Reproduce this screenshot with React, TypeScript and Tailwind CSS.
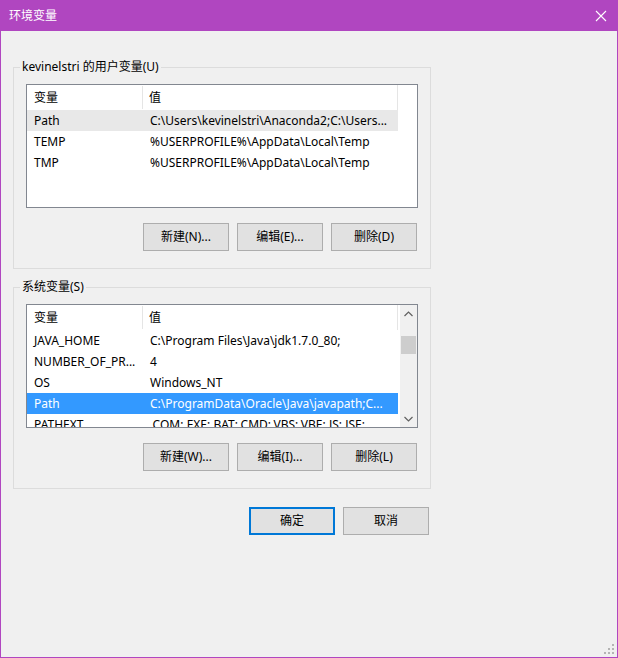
type Row = { name: string; value: string; state?: 'selected' | 'inactive' };

const userRows: Row[] = [
  { name: 'Path', value: 'C:\\Users\\kevinelstri\\Anaconda2;C:\\Users...', state: 'inactive' },
  { name: 'TEMP', value: '%USERPROFILE%\\AppData\\Local\\Temp' },
  { name: 'TMP', value: '%USERPROFILE%\\AppData\\Local\\Temp' },
];

const systemRows: Row[] = [
  { name: 'JAVA_HOME', value: 'C:\\Program Files\\Java\\jdk1.7.0_80;' },
  { name: 'NUMBER_OF_PR...', value: '4' },
  { name: 'OS', value: 'Windows_NT' },
  { name: 'Path', value: 'C:\\ProgramData\\Oracle\\Java\\javapath;C...', state: 'selected' },
  { name: 'PATHEXT', value: '.COM;.EXE;.BAT;.CMD;.VBS;.VBE;.JS;.JSE;...' },
];

function Button({ label, primary }: { label: string; primary?: boolean }) {
  return (
    <button
      className={
        'flex h-[28px] w-[86px] items-center justify-center bg-[#e1e1e1] text-[12px] text-black ' +
        (primary ? 'border-2 border-[#0078d7]' : 'border border-[#adadad]')
      }
    >
      {label}
    </button>
  );
}

function ScrollBar() {
  return (
    <div className="flex w-[17px] shrink-0 flex-col bg-[#f0f0f0]">
      <div className="flex h-[17px] items-center justify-center">
        <svg width="9" height="6" viewBox="0 0 9 6">
          <path d="M0.5 5 L4.5 1 L8.5 5" fill="none" stroke="#606060" strokeWidth="1.2" />
        </svg>
      </div>
      <div className="mx-[1px] mt-[14px] h-[18px] bg-[#cdcdcd]" />
      <div className="flex-1" />
      <div className="flex h-[17px] items-center justify-center">
        <svg width="9" height="6" viewBox="0 0 9 6">
          <path d="M0.5 1 L4.5 5 L8.5 1" fill="none" stroke="#606060" strokeWidth="1.2" />
        </svg>
      </div>
    </div>
  );
}

function ListBox({ rows, scroll }: { rows: Row[]; scroll?: boolean }) {
  return (
    <div className="flex h-[124px] w-[392px] border border-[#828790] bg-white">
      <div className="flex-1 overflow-hidden">
        <div className="flex h-[25px] w-[371px] items-center border-r border-[#e5e5e5] text-[12px]">
          <div className="w-[116px] border-r border-[#e5e5e5] pl-[7px] leading-[23px]">变量</div>
          <div className="pl-[6px]">值</div>
        </div>
        {rows.map((r) => (
          <div
            key={r.name + r.value}
            className={
              'flex h-[21px] w-[371px] items-center whitespace-nowrap text-[12px] ' +
              (r.state === 'selected'
                ? 'bg-[#3399ff] text-white'
                : r.state === 'inactive'
                  ? 'bg-[#e8e8e8] text-black'
                  : 'text-black')
            }
          >
            <div className="w-[116px] overflow-hidden pl-[7px]">{r.name}</div>
            <div className="flex-1 overflow-hidden pl-[7px]">{r.value}</div>
          </div>
        ))}
      </div>
      {scroll && <ScrollBar />}
    </div>
  );
}

function Group({
  title,
  rows,
  buttons,
  scroll,
}: {
  title: string;
  rows: Row[];
  buttons: string[];
  scroll?: boolean;
}) {
  return (
    <fieldset className="w-[418px] border border-[#dcdcdc] px-[12px] pb-[17px]">
      <legend className="-ml-[6px] px-[2px] text-[12px] leading-[16px] text-black">{title}</legend>
      <div className="mt-[9px]">
        <ListBox rows={rows} scroll={scroll} />
      </div>
      <div className="mt-[15px] flex justify-end gap-[8px] pr-[1px]">
        {buttons.map((b) => (
          <Button key={b} label={b} />
        ))}
      </div>
    </fieldset>
  );
}

export default function App() {
  return (
    <div className="flex h-[658px] w-[618px] flex-col font-[Noto_Sans,Noto_Sans_CJK_SC,sans-serif]">
      <div className="flex h-[31px] shrink-0 items-center justify-between bg-[#b046c0] pl-[9px] pr-[11px] text-white">
        <span className="text-[12px]">环境变量</span>
        <svg width="12" height="12" viewBox="0 0 12 12">
          <path d="M1 1 L11 11 M11 1 L1 11" stroke="#fff" strokeWidth="1.1" />
        </svg>
      </div>
      <div className="relative flex flex-1 flex-col border-x border-b border-[#b046c0] bg-[#f0f0f0] px-[12px] pt-[28px]">
        <Group
          title="kevinelstri 的用户变量(U)"
          rows={userRows}
          buttons={['新建(N)...', '编辑(E)...', '删除(D)']}
        />
        <div className="mt-[10px]">
          <Group
            title="系统变量(S)"
            rows={systemRows}
            buttons={['新建(W)...', '编辑(I)...', '删除(L)']}
            scroll
          />
        </div>
        <div className="mt-[18px] flex w-[416px] justify-end gap-[8px]">
          <Button label="确定" primary />
          <Button label="取消" />
        </div>
        <svg className="absolute bottom-[2px] right-[2px]" width="11" height="11" viewBox="0 0 11 11">
          {[
            [8, 0],
            [8, 4],
            [4, 4],
            [8, 8],
            [4, 8],
            [0, 8],
          ].map(([x, y]) => (
            <rect key={`${x}-${y}`} x={x} y={y} width="2" height="2" fill="#b4b4b4" />
          ))}
        </svg>
      </div>
    </div>
  );
}
